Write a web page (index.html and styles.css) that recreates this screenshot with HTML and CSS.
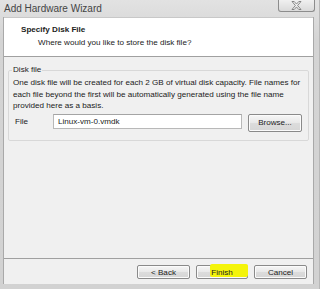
FILE: index.html
```html
<!DOCTYPE html>
<html lang="en">
<head>
    <meta charset="UTF-8">
    <title>Add Hardware Wizard</title>
    <link rel="stylesheet" href="styles.css">
</head>
<body>
    <div class="window">
        <div class="titlebar">
            <span class="title">Add Hardware Wizard</span>
            <button class="close" title="Close">
                <svg width="11" height="9" viewBox="0 0 11 9">
                    <path d="M1 0.5h2.2l2.3 2.6 2.3-2.6h2.2l-3.4 4 3.4 4h-2.2l-2.3-2.6-2.3 2.6h-2.2l3.4-4z" fill="#f4f4f4" stroke="#6e6e6e" stroke-width="0.8"/>
                </svg>
            </button>
        </div>
        <div class="client">
            <div class="header">
                <div class="header-title">Specify Disk File</div>
                <div class="header-sub">Where would you like to store the disk file?</div>
            </div>
            <div class="content">
                <fieldset class="group">
                    <legend>Disk file</legend>
                    <p>One disk file will be created for each 2 GB of virtual disk capacity. File names for<br>each file beyond the first will be automatically generated using the file name<br>provided here as a basis.</p>
                    <div class="file-row">
                        <label for="fileName">File</label>
                        <input type="text" id="fileName" value="Linux-vm-0.vmdk">
                        <button class="btn browse">Browse...</button>
                    </div>
                </fieldset>
            </div>
            <div class="footer">
                <button class="btn">&lt; Back</button>
                <button class="btn finish"><span class="marker"></span><span class="label">Finish</span></button>
                <button class="btn">Cancel</button>
            </div>
        </div>
    </div>
</body>
</html>
```

FILE: styles.css
```css
html, body {
    margin: 0;
    padding: 0;
}
body {
    font-family: "Liberation Sans", Arial, sans-serif;
    font-size: 8.1px;
    color: #222;
    background: #d6d6d6;
}
.window {
    width: 320px;
    height: 289px;
    box-sizing: border-box;
    padding: 0 5px 5px 3px;
    background: linear-gradient(#e2e2e2, #d4d4d4 40px, #d2d2d2);
    display: flex;
    flex-direction: column;
    border-right: 1px solid #b8b8b8;
}
.titlebar {
    height: 17px;
    display: flex;
    align-items: flex-start;
    justify-content: space-between;
}
.title {
    font-size: 10px;
    color: #444;
    margin: 3px 0 0 1px;
}
.close {
    width: 37px;
    height: 12px;
    margin-right: -1px;
    padding: 0;
    border: 1px solid #8c8c8c;
    border-top: none;
    border-radius: 0 0 3px 3px;
    background: linear-gradient(#f0f0f0, #dadada);
    display: flex;
    align-items: center;
    justify-content: center;
}
.client {
    flex: 1;
    display: flex;
    flex-direction: column;
    background: #f0f0f0;
    border-left: 1px solid #a9a9a9;
    border-right: 1px solid #a9a9a9;
}
.header {
    height: 38px;
    background: #fff;
    border-bottom: 1px solid #a0a0a0;
    border-top: 1px solid #c8c8c8;
}
.header-title {
    font-weight: bold;
    margin: 7px 0 0 17px;
    line-height: 10px;
}
.header-sub {
    margin: 3px 0 0 34px;
    line-height: 10px;
}
.content {
    flex: 1;
}
.group {
    margin: 8px 4px 0;
    padding: 0 5px 8px 3px;
    border: 1px solid #d8d8d8;
    border-radius: 2px;
}
.group legend {
    padding: 0 1px;
    line-height: 10px;
}
.group p {
    margin: 2px 0 0 1px;
    line-height: 11.5px;
    white-space: nowrap;
}
.file-row {
    display: flex;
    align-items: flex-start;
    margin-top: 2px;
}
.file-row label {
    width: 38px;
    padding-left: 3px;
    line-height: 15px;
}
.file-row input {
    width: 189px;
    height: 15px;
    box-sizing: border-box;
    border: 1px solid #b8b8b8;
    border-top-color: #a4a4a4;
    padding: 0 4px;
    font: inherit;
    color: #222;
    background: #fff;
    outline: none;
}
.btn {
    font: inherit;
    color: #222;
    padding: 0;
    border: 1px solid #8a8a8a;
    border-radius: 2px;
    background: linear-gradient(#f6f6f6, #e8e8e8 50%, #dcdcdc 51%, #d6d6d6);
    box-shadow: inset 0 0 0 1px #fbfbfb;
}
.browse {
    width: 54px;
    height: 18px;
    margin-left: 6px;
}
.footer {
    border-top: 1px solid #a0a0a0;
    display: flex;
    justify-content: flex-end;
    gap: 6px;
    padding: 6px 6px 5px 0;
}
.footer .btn {
    width: 53px;
    height: 14px;
}
.footer .finish {
    width: 52px;
    position: relative;
}
.finish .marker {
    position: absolute;
    left: 13px;
    top: -2px;
    width: 38px;
    height: 13px;
    background: #f4f40a;
    border-radius: 2px;
}
.finish .label {
    position: relative;
}
```
